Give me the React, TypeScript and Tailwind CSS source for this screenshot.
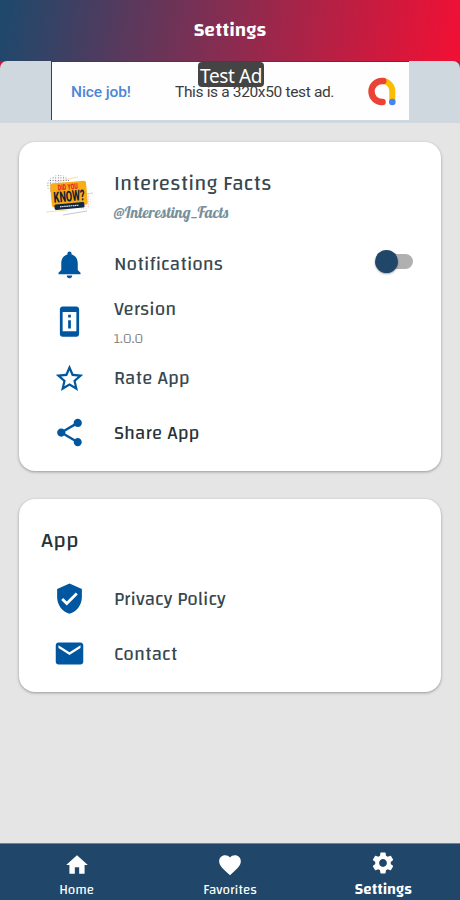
import type { ReactNode } from "react";
import {
  MdEmail,
  MdFavorite,
  MdHome,
  MdNotifications,
  MdPermDeviceInformation,
  MdSettings,
  MdShare,
  MdStarBorder,
  MdVerifiedUser,
} from "react-icons/md";

function FactsLogo() {
  return (
    <svg width="50" height="44" viewBox="0 0 50 44">
      <defs>
        <pattern id="dots" width="2.6" height="2.6" patternUnits="userSpaceOnUse">
          <circle cx="1.3" cy="1.3" r="0.6" fill="#6b7280" />
        </pattern>
        <pattern id="pinkDots" width="2.4" height="2.4" patternUnits="userSpaceOnUse">
          <circle cx="1.2" cy="1.2" r="0.6" fill="#f7b4ba" />
        </pattern>
      </defs>
      <ellipse cx="15" cy="11" rx="12" ry="10" fill="url(#dots)" />
      <ellipse cx="39" cy="27" rx="8" ry="9" fill="url(#pinkDots)" />
      <path d="M11 8 L34 3" stroke="#f9c66a" strokeWidth="0.6" />
      <path d="M2 38 L24 36" stroke="#f9c66a" strokeWidth="0.6" />
      <path d="M19 41 L43 37" stroke="#94a3b8" strokeWidth="0.6" />
      <path d="M41 20 L49 19" stroke="#94a3b8" strokeWidth="0.5" />
      <g transform="rotate(-5 25 21)" fontFamily="Roboto, sans-serif">
        <rect x="7" y="8" width="36" height="24" rx="2" fill="#f9ad19" />
        <text x="24.5" y="15.6" textAnchor="middle" textLength="20" lengthAdjust="spacingAndGlyphs" fontSize="8" fontWeight="900" fill="#e8202a">
          DID YOU
        </text>
        <text x="25" y="27.4" textAnchor="middle" textLength="31" lengthAdjust="spacingAndGlyphs" fontSize="15" fontWeight="800" fill="#14202e">
          KNOW?
        </text>
        <rect x="9.5" y="29.2" width="30" height="5.6" rx="1.5" fill="#0f2740" />
        <path d="M15 32 H34" stroke="#dbe3ea" strokeWidth="1.2" strokeDasharray="1.6 0.5" />
      </g>
    </svg>
  );
}

function AdMobLogo() {
  return (
    <svg width="28" height="29" viewBox="0 0 28 29" fill="none" strokeLinecap="round">
      <path d="M14.5 4 A10 10 0 0 1 24.3 14 V24" stroke="#fbbc04" strokeWidth="6" />
      <path d="M15.3 4 H14 A10.2 10.2 0 0 0 14 25 H14.6" stroke="#ea4335" strokeWidth="6.4" />
      <circle cx="24.3" cy="25" r="3.3" fill="#4285f4" />
    </svg>
  );
}

function Row({ icon, className, children }: { icon: ReactNode; className: string; children: ReactNode }) {
  return (
    <div className={`flex items-center ${className}`}>
      <div className="w-[50px] ml-[25px] mr-5 flex items-center justify-center text-[#00579f]">{icon}</div>
      {children}
    </div>
  );
}

export default function App() {
  const label = "pt-[2px] text-[19px] leading-6 tracking-[0.05px] text-[#37474f]";

  return (
    <div className="w-full h-[900px] flex flex-col bg-[#e5e5e5] font-['Changa','Roboto','Noto_Sans',sans-serif] overflow-hidden">
      <header className="h-[61px] shrink-0 flex items-center justify-center bg-[linear-gradient(100deg,#20486b_2%,#892c50_50%,#ee1135_98%)]">
        <h1 className="text-white font-semibold text-[19.5px]">Settings</h1>
      </header>

      <div className="h-[62px] shrink-0 bg-[#c8143c]">
        <div className="h-full flex justify-center bg-[#cfd8df] rounded-t-[7px]">
          <div className="relative w-[358px] h-[59px] flex items-center bg-[#fefefe] border-l border-t border-[#2c4563] font-['Google_Sans','Roboto',sans-serif] text-[15.5px]">
            <span className="w-[104px] ml-[19px] pt-[3px] text-[#4e86d6] font-medium tracking-[-0.1px]">Nice job!</span>
            <span className="w-[193px] pt-[3px] text-[#3c3c3c] tracking-[-0.35px] whitespace-nowrap">This is a 320x50 test ad.</span>
            <AdMobLogo />
            <span className="absolute left-[146px] top-0 w-[66px] h-[25px] pt-[3px] flex items-center justify-center rounded-[4px] bg-[#444444] font-['Noto_Sans',sans-serif] text-white text-[19px] tracking-[-0.4px] whitespace-nowrap">
              Test Ad
            </span>
          </div>
        </div>
      </div>

      <main className="flex-1 pt-[19px] px-[19px]">
        <section className="h-[329px] pt-4 bg-white rounded-2xl shadow-[0_1px_3px_rgba(0,0,0,0.35)]">
          <Row className="h-[76px]" icon={<FactsLogo />}>
            <div className="flex flex-col pt-[7px]">
              <h2 className="text-[21px] leading-7 tracking-[0.2px] text-[#37474f]">Interesting Facts</h2>
              <span className="h-8 pt-[2px] font-['Lobster','Liberation_Serif',serif] text-[15.7px] leading-6 text-[#78909c]">
                @Interesting_Facts
              </span>
            </div>
          </Row>
          <Row className="h-[60px]" icon={<MdNotifications size={33} />}>
            <span className={label}>Notifications</span>
            <div className="ml-auto mr-7 mb-[5px] flex items-center">
              <span className="z-10 w-[23px] h-[23px] rounded-full bg-[#20476a] shadow-[0_1px_2px_rgba(0,0,0,0.35)]" />
              <span className="-ml-[17px] w-8 h-[15px] rounded-full bg-[#b0b0b0]" />
            </div>
          </Row>
          <Row className="h-[54px]" icon={<MdPermDeviceInformation size={33} />}>
            <div className="flex flex-col gap-[7px] pt-[2px]">
              <span className={label}>Version</span>
              <span className="text-[14px] leading-5 font-light text-[#858585]">1.0.0</span>
            </div>
          </Row>
          <Row className="h-[60px]" icon={<MdStarBorder size={33} />}>
            <span className={label}>Rate App</span>
          </Row>
          <Row className="h-[49px]" icon={<MdShare size={33} />}>
            <span className="pt-[2px] text-[19px] leading-6 tracking-[0.1px] text-[#263238]">Share App</span>
          </Row>
        </section>

        <section className="mt-7 h-[193px] pt-[13px] bg-white rounded-2xl shadow-[0_1px_3px_rgba(0,0,0,0.35)]">
          <h2 className="h-14 pt-px pl-[22px] flex items-center text-[22px] tracking-[0.2px] text-[#263238]">App</h2>
          <Row className="h-[61px]" icon={<MdVerifiedUser size={33} />}>
            <span className={label}>Privacy Policy</span>
          </Row>
          <Row className="h-[49px]" icon={<MdEmail size={33} />}>
            <span className={label}>Contact</span>
          </Row>
        </section>
      </main>

      <nav className="h-[57px] shrink-0 grid grid-cols-3 bg-[#20476a] border-t border-[#668598] text-white">
        <button className="flex flex-col items-center pt-2">
          <MdHome size={26} />
          <span className="pt-px text-[13.5px] leading-[22px]">Home</span>
        </button>
        <button className="flex flex-col items-center pt-2">
          <MdFavorite size={26} />
          <span className="pt-px text-[13.5px] leading-[22px]">Favorites</span>
        </button>
        <button className="flex flex-col items-center pt-[6px]">
          <MdSettings size={26} />
          <span className="pt-px text-[15.3px] leading-6 font-semibold">Settings</span>
        </button>
      </nav>
    </div>
  );
}
